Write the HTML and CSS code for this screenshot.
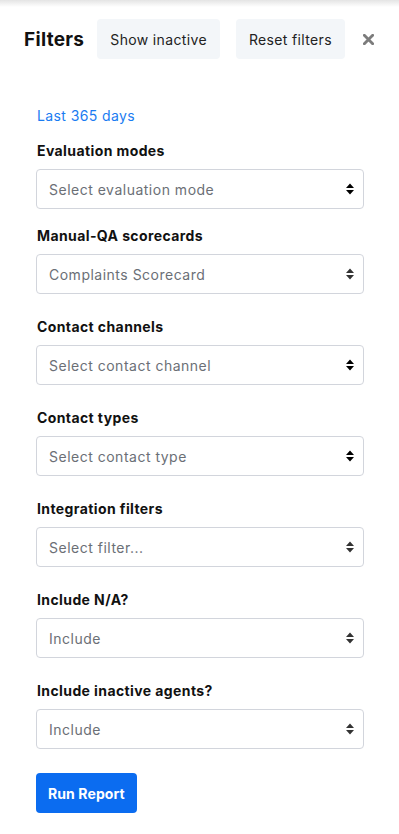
FILE: index.html
```html
<!DOCTYPE html>
<html lang="en">
<head>
    <meta charset="UTF-8">
    <meta name="viewport" content="width=device-width, initial-scale=1.0">
    <title>Filters</title>
    <link rel="stylesheet" href="styles.css">
</head>
<body>
    <div class="top-shadow"></div>
    <div class="panel">
        <div class="header">
            <h1>Filters</h1>
            <button class="light-btn">Show inactive</button>
            <button class="light-btn">Reset filters</button>
            <svg class="close" viewBox="0 0 10 10"><path d="M1.2 1.2 L8.8 8.8 M8.8 1.2 L1.2 8.8"/></svg>
        </div>

        <div class="filters">
            <a class="date-link" href="#">Last 365 days</a>

            <div class="group first">
                <label>Evaluation modes</label>
                <div class="select-wrap">
                    <select><option>Select evaluation mode</option></select>
                    <svg class="caret dark" viewBox="0 0 8 12"><path d="M0 5 L4 0.5 L8 5 Z M0 7 L8 7 L4 11.5 Z"/></svg>
                </div>
            </div>

            <div class="group">
                <label>Manual-QA scorecards</label>
                <div class="select-wrap">
                    <select><option>Complaints Scorecard</option></select>
                    <svg class="caret" viewBox="0 0 8 12"><path d="M0 5 L4 0.5 L8 5 Z M0 7 L8 7 L4 11.5 Z"/></svg>
                </div>
            </div>

            <div class="group">
                <label>Contact channels</label>
                <div class="select-wrap">
                    <select><option>Select contact channel</option></select>
                    <svg class="caret dark" viewBox="0 0 8 12"><path d="M0 5 L4 0.5 L8 5 Z M0 7 L8 7 L4 11.5 Z"/></svg>
                </div>
            </div>

            <div class="group">
                <label>Contact types</label>
                <div class="select-wrap">
                    <select><option>Select contact type</option></select>
                    <svg class="caret dark" viewBox="0 0 8 12"><path d="M0 5 L4 0.5 L8 5 Z M0 7 L8 7 L4 11.5 Z"/></svg>
                </div>
            </div>

            <div class="group">
                <label>Integration filters</label>
                <div class="select-wrap">
                    <select><option>Select filter...</option></select>
                    <svg class="caret" viewBox="0 0 8 12"><path d="M0 5 L4 0.5 L8 5 Z M0 7 L8 7 L4 11.5 Z"/></svg>
                </div>
            </div>

            <div class="group">
                <label>Include N/A?</label>
                <div class="select-wrap">
                    <select><option>Include</option></select>
                    <svg class="caret" viewBox="0 0 8 12"><path d="M0 5 L4 0.5 L8 5 Z M0 7 L8 7 L4 11.5 Z"/></svg>
                </div>
            </div>

            <div class="group">
                <label>Include inactive agents?</label>
                <div class="select-wrap">
                    <select><option>Include</option></select>
                    <svg class="caret" viewBox="0 0 8 12"><path d="M0 5 L4 0.5 L8 5 Z M0 7 L8 7 L4 11.5 Z"/></svg>
                </div>
            </div>

            <button class="run-btn">Run Report</button>
        </div>
    </div>
</body>
</html>
```

FILE: styles.css
```css
body {
    font-family: Inter, "Open Sans", sans-serif;
    background-color: #fff;
    color: #111;
    margin: 0;
    padding: 0;
}

.top-shadow {
    height: 7px;
    background: linear-gradient(#e4e4e4, #fff);
}

.panel {
    padding: 12px 0 0 0;
}

.header {
    display: flex;
    align-items: center;
    height: 40px;
    padding-left: 24px;
}

.header h1 {
    font-size: 19px;
    font-weight: 700;
    margin: 0 13px 0 0;
    letter-spacing: 0.3px;
}

.light-btn {
    font-family: inherit;
    font-size: 14px;
    letter-spacing: 0.35px;
    color: #222;
    background-color: #f3f6f9;
    border: none;
    border-radius: 4px;
    height: 40px;
    padding: 0 13px;
    margin-right: 16px;
    cursor: pointer;
}

.close {
    width: 11px;
    height: 11px;
    margin-left: 2px;
    stroke: #7c7c7c;
    stroke-width: 2.6;
    stroke-linecap: round;
    fill: none;
}

.filters {
    padding: 46px 35px 0 36px;
    display: flex;
    flex-direction: column;
    align-items: flex-start;
}

.date-link {
    color: #1a7cf2;
    font-size: 14px;
    letter-spacing: 0.4px;
    text-decoration: none;
    line-height: 21px;
    margin-left: 1px;
    margin-bottom: 14px;
}

.group {
    width: 100%;
    margin-bottom: 22px;
}

.group.first {
    margin-bottom: 16px;
}

.group label {
    display: block;
    font-size: 14px;
    font-weight: 700;
    letter-spacing: 0.4px;
    line-height: 21px;
    margin: 0 0 8px 1px;
}

.select-wrap {
    position: relative;
}

.select-wrap select {
    appearance: none;
    width: 100%;
    height: 40px;
    border: 1px solid #d2d5dc;
    border-radius: 4px;
    background-color: #fff;
    font-family: inherit;
    font-size: 14px;
    letter-spacing: 0.5px;
    color: #6b6f76;
    padding: 0 12px;
}

.caret {
    position: absolute;
    right: 10px;
    top: 14px;
    width: 8px;
    height: 12px;
    fill: #333;
}

.caret.dark {
    fill: #000;
}

.run-btn {
    font-family: inherit;
    font-size: 14px;
    font-weight: 700;
    letter-spacing: 0.1px;
    color: #fff;
    background-color: #0b6cf0;
    border: none;
    border-radius: 4px;
    height: 40px;
    padding: 0 12px;
    margin-top: 2px;
    cursor: pointer;
}
```
